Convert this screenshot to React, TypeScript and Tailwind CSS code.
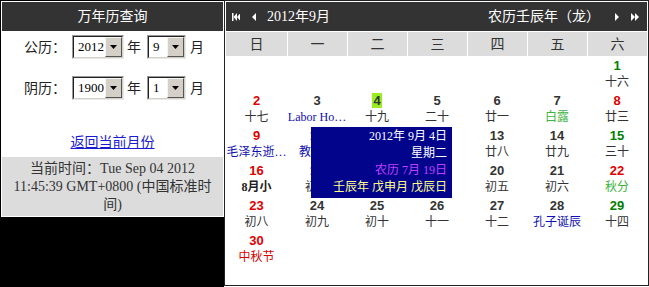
import React from "react";

const serif = "font-['Liberation_Serif','Noto_Sans_CJK_SC',serif]";

type Day = {
  d: number;
  sub: string;
  num?: string;
  subCls?: string;
  today?: boolean;
};

const blue = "text-[#1010b0]";
const term = "text-[#3cb43c]";

const weeks: (Day | null)[][] = [
  [null, null, null, null, null, null, { d: 1, sub: "十六" }],
  [
    { d: 2, sub: "十七" },
    { d: 3, sub: "Labor Ho…", subCls: blue },
    { d: 4, sub: "十九", today: true },
    { d: 5, sub: "二十" },
    { d: 6, sub: "廿一" },
    { d: 7, sub: "白露", subCls: term },
    { d: 8, sub: "廿三", num: "text-[#e00000]" },
  ],
  [
    { d: 9, sub: "毛泽东逝…", subCls: blue },
    { d: 10, sub: "教师节", subCls: blue },
    { d: 11, sub: "廿六" },
    { d: 12, sub: "廿七" },
    { d: 13, sub: "廿八" },
    { d: 14, sub: "廿九" },
    { d: 15, sub: "三十" },
  ],
  [
    { d: 16, sub: "8月小", subCls: "font-bold text-[#222]" },
    { d: 17, sub: "初二" },
    { d: 18, sub: "初三" },
    { d: 19, sub: "初四" },
    { d: 20, sub: "初五" },
    { d: 21, sub: "初六" },
    { d: 22, sub: "秋分", subCls: term, num: "text-[#e00000]" },
  ],
  [
    { d: 23, sub: "初八" },
    { d: 24, sub: "初九" },
    { d: 25, sub: "初十" },
    { d: 26, sub: "十一" },
    { d: 27, sub: "十二" },
    { d: 28, sub: "孔子诞辰", subCls: blue },
    { d: 29, sub: "十四" },
  ],
  [{ d: 30, sub: "中秋节", subCls: "text-[#d80000]" }, null, null, null, null, null, null],
];

const colNum = ["text-[#e00000]", "text-[#333]", "text-[#333]", "text-[#333]", "text-[#333]", "text-[#333]", "text-[#008000]"];

function SelectBox({ value, w }: { value: string; w: string }) {
  return (
    <div className={`flex h-[24px] ${w} border border-t-[#9a9a9a] border-l-[#9a9a9a] border-b-[#e8e8e8] border-r-[#e8e8e8]`}>
      <div className="flex flex-1 items-stretch border border-t-[#222] border-l-[#222] border-b-[#d4d0c8] border-r-[#d4d0c8] bg-white">
        <span className="flex-1 pl-[4px] text-[13px] leading-[20px] text-black">{value}</span>
        <div className="flex w-[17px] items-center justify-center border border-t-[#f4f4f4] border-l-[#f4f4f4] border-b-[#555] border-r-[#555] bg-[#d4d0c8]">
          <svg width="7" height="4" viewBox="0 0 7 4">
            <polygon points="0,0 7,0 3.5,4" fill="#000" />
          </svg>
        </div>
      </div>
    </div>
  );
}

export default function App() {
  return (
    <div className={`flex h-[287px] w-[649px] bg-white ${serif}`}>
      {/* left query panel */}
      <div className="h-full w-[224px] bg-black pl-px pt-px">
        <div className="w-[223px] bg-white p-px">
          <div className="flex h-[29px] items-center justify-center bg-[#333] text-[14px] text-white">万年历查询</div>
          <div className="flex h-[30px] items-center pl-[22px] pt-[2px] text-[14px] text-[#222]">
            <span className="w-[48px]">公历：</span>
            <SelectBox value="2012" w="w-[52px]" />
            <span className="ml-[3px] w-[20px]">年</span>
            <SelectBox value="9" w="w-[39px]" />
            <span className="ml-[4px]">月</span>
          </div>
          <div className="mt-[12px] flex h-[30px] items-center pl-[22px] text-[14px] text-[#222]">
            <span className="w-[48px]">阴历：</span>
            <SelectBox value="1900" w="w-[52px]" />
            <span className="ml-[3px] w-[20px]">年</span>
            <SelectBox value="1" w="w-[39px]" />
            <span className="ml-[4px]">月</span>
          </div>
          <div className="pt-[31px] text-center text-[14px] leading-[18px]">
            <a href="#" className="text-[#1a1ad0] underline">返回当前月份</a>
          </div>
          <div className="mt-[5px] h-[59px] bg-[#dcdcdc] pt-[3px] text-center text-[14px] leading-[18px] text-[#333]">
            <div>当前时间：Tue Sep 04 2012</div>
            <div>11:45:39 GMT+0800 (中国标准时</div>
            <div>间)</div>
          </div>
        </div>
      </div>

      {/* right calendar panel */}
      <div className="h-[286px] w-[425px] border border-[#222] p-px">
        <div className="relative">
          <div className="flex h-[29px] items-center bg-[#333] text-[14px] text-white">
            <svg className="ml-[6px]" width="8" height="8" viewBox="0 0 8 8">
              <rect x="0" y="0" width="1.5" height="8" fill="#fff" />
              <polygon points="5,0 5,8 1.5,4" fill="#fff" />
              <polygon points="8.5,0 8.5,8 5,4" fill="#fff" />
            </svg>
            <svg className="ml-[12px]" width="4" height="8" viewBox="0 0 4 8">
              <polygon points="4,0 4,8 0,4" fill="#fff" />
            </svg>
            <span className="ml-[11px]">2012年9月</span>
            <span className="ml-auto">农历壬辰年（龙）</span>
            <svg className="ml-[15px]" width="4" height="8" viewBox="0 0 4 8">
              <polygon points="0,0 0,8 4,4" fill="#fff" />
            </svg>
            <svg className="ml-[12px] mr-[8px]" width="8" height="8" viewBox="0 0 8 8">
              <polygon points="0,0 0,8 4,4" fill="#fff" />
              <polygon points="4,0 4,8 8,4" fill="#fff" />
            </svg>
          </div>

          <div className="mt-px grid grid-cols-[61px_repeat(6,60px)] text-[14px] text-[#333]">
            {["日", "一", "二", "三", "四", "五", "六"].map((w, i) => (
              <div key={w} className={`flex h-[24px] items-center justify-center bg-[#dcdcdc] ${i > 0 ? "border-l border-white" : ""}`}>
                {w}
              </div>
            ))}
          </div>

          <div className="grid grid-cols-[61px_repeat(6,60px)]">
            {weeks.flatMap((row, r) =>
              row.map((c, i) =>
                c ? (
                  <div key={`${r}-${i}`} className="flex h-[35px] flex-col items-center pt-[2px]">
                    <span className={`font-['Liberation_Sans',sans-serif] text-[13px] font-bold leading-[16px] ${c.num ?? colNum[i]}`}>
                      <span className={c.today ? "bg-[#99ee22] px-px" : ""}>{c.d}</span>
                    </span>
                    <span className={`whitespace-nowrap text-[12px] leading-[17px] ${c.subCls ?? "text-[#333]"}`}>{c.sub}</span>
                  </div>
                ) : (
                  <div key={`${r}-${i}`} className="h-[35px]" />
                )
              )
            )}
          </div>

          {/* day tooltip */}
          <div className="absolute left-[85px] top-[125px] h-[71px] w-[141px] bg-[#02048c] pr-[5px] pt-px text-right text-[12px] leading-[17px]">
            <div className="text-white">2012年 9月 4日</div>
            <div className="text-white">星期二</div>
            <div className="text-[#c040ff]">农历 7月 19日</div>
            <div className="text-[#ffff88]">壬辰年 戊申月 戊辰日</div>
          </div>
        </div>
      </div>
    </div>
  );
}
